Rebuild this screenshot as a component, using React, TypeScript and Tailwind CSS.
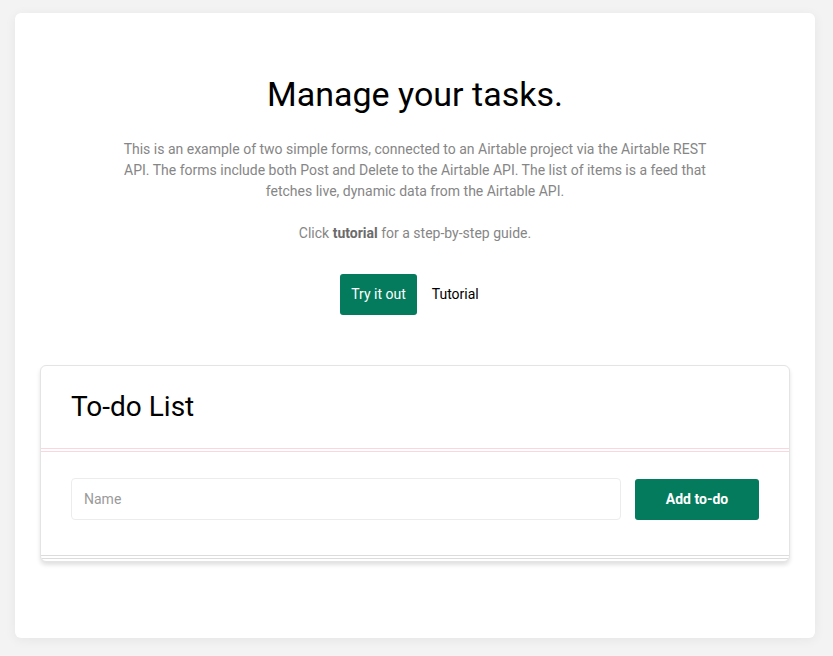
import { useState } from 'react';

export default function App() {
  const [name, setName] = useState('');

  return (
    <div className="min-h-screen bg-[#f3f3f3] pl-[15px] pr-[18px] pt-[13px] pb-[18px]" style={{ fontFamily: 'Roboto, "Open Sans", sans-serif' }}>
      <div className="bg-white rounded-[6px] shadow-[0_2px_12px_rgba(0,0,0,0.06)] h-[625px] px-[25px] pt-[60px]">
        <h1 className="text-center text-[34px] leading-[42px] text-black font-normal">Manage your tasks.</h1>

        <p className="mx-auto mt-[24px] w-[600px] text-center text-[14px] leading-[21px] text-[#868686]">
          This is an example of two simple forms, connected to an Airtable project via the Airtable REST API. The forms include both Post and Delete to the Airtable API. The list of items is a feed that fetches live, dynamic data from the Airtable API.
        </p>
        <p className="mt-[21px] text-center text-[14px] leading-[21px] text-[#868686]">
          Click <span className="font-bold text-[#6b6b6b]">tutorial</span> for a step-by-step guide.
        </p>

        <div className="mt-[30px] flex justify-center items-center gap-[4px]">
          <button className="h-[41px] px-[11px] rounded-[3px] bg-[#037b5c] text-white text-[14px]">Try it out</button>
          <button className="h-[41px] px-[11px] text-black text-[14px]">Tutorial</button>
        </div>

        {/* To-do card */}
        <div className="mt-[50px] border border-[#e4e4e4] rounded-[6px] shadow-[0_3px_4px_rgba(0,0,0,0.12)] bg-white overflow-hidden">
          <div className="h-[82px] flex items-center px-[30px]">
            <h2 className="text-[28px] text-black font-normal">To-do List</h2>
          </div>
          <div className="h-[4px] border-y border-[#fbd6de]" />
          <div className="flex items-center gap-[14px] px-[30px] pt-[26px] pb-[35px]">
            <input
              value={name}
              onChange={(e) => setName(e.target.value)}
              placeholder="Name"
              className="flex-1 h-[42px] px-[12px] border border-[#ececec] rounded-[4px] text-[14px] text-black placeholder:text-[#9a9a9a] outline-none"
            />
            <button className="w-[124px] h-[41px] rounded-[3px] bg-[#037b5c] text-white text-[14px] font-bold">Add to-do</button>
          </div>
          <div className="h-[4px] border-y border-[#dcdcdc]" />
          <div className="h-[2px]" />
        </div>
      </div>
    </div>
  );
}
